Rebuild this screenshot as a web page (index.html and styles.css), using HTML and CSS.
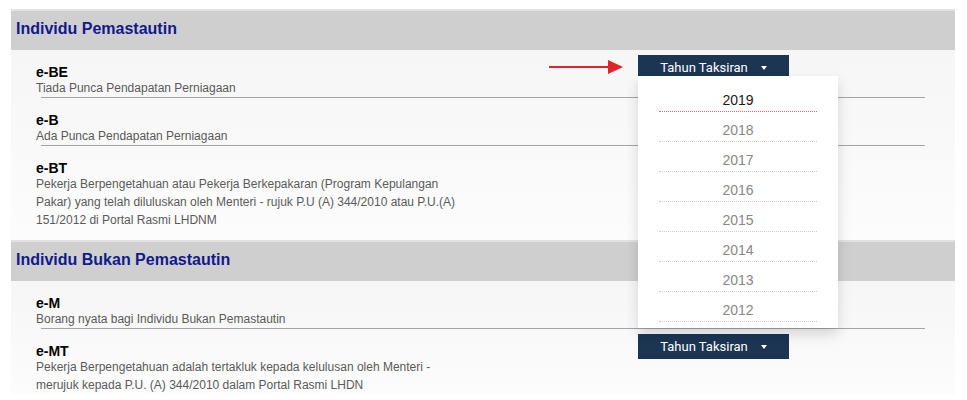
FILE: index.html
```
<!DOCTYPE html>
<html lang="ms">
<head>
<meta charset="utf-8">
<title>Borang Nyata</title>
<link rel="stylesheet" href="styles.css">
</head>
<body>
<div class="page">
  <section class="sec">
    <h2 class="sec-head">Individu Pemastautin</h2>
    <div class="sec-body">
      <div class="item">
        <div class="info">
          <div class="code">e-BE</div>
          <div class="desc">Tiada Punca Pendapatan Perniagaan</div>
        </div>
        <div class="picker">
          <svg class="arrow" width="75" height="16" viewBox="0 0 75 16" aria-hidden="true">
            <line x1="0" y1="8" x2="61" y2="8" stroke="#e3232a" stroke-width="2"/>
            <polygon points="59,1 74,8 59,15" fill="#e3232a"/>
          </svg>
          <button class="btn" type="button">Tahun Taksiran <span class="caret"></span></button>
          <ul class="menu">
            <li class="active">2019</li>
            <li>2018</li>
            <li>2017</li>
            <li>2016</li>
            <li>2015</li>
            <li>2014</li>
            <li>2013</li>
            <li>2012</li>
          </ul>
        </div>
      </div>
      <div class="item">
        <div class="info">
          <div class="code">e-B</div>
          <div class="desc">Ada Punca Pendapatan Perniagaan</div>
        </div>
      </div>
      <div class="item last">
        <div class="info">
          <div class="code">e-BT</div>
          <div class="desc">Pekerja Berpengetahuan atau Pekerja Berkepakaran (Program Kepulangan Pakar) yang telah diluluskan oleh Menteri - rujuk P.U (A) 344/2010 atau P.U.(A) 151/2012 di Portal Rasmi LHDNM</div>
        </div>
      </div>
    </div>
  </section>
  <section class="sec">
    <h2 class="sec-head">Individu Bukan Pemastautin</h2>
    <div class="sec-body">
      <div class="item">
        <div class="info">
          <div class="code">e-M</div>
          <div class="desc">Borang nyata bagi Individu Bukan Pemastautin</div>
        </div>
      </div>
      <div class="item last end">
        <div class="info">
          <div class="code">e-MT</div>
          <div class="desc">Pekerja Berpengetahuan adalah tertakluk kepada kelulusan oleh Menteri - merujuk kepada P.U. (A) 344/2010 dalam Portal Rasmi LHDN</div>
        </div>
        <div class="picker">
          <button class="btn" type="button">Tahun Taksiran <span class="caret"></span></button>
        </div>
      </div>
    </div>
  </section>
</div>
</body>
</html>
```
FILE: styles.css
```
html, body {
  margin: 0;
  padding: 0;
  background: #ffffff;
}

body {
  font-family: "Liberation Sans", Arial, sans-serif;
  color: #000;
}

.page {
  margin: 9px 12px 0 11px;
}

.sec-head {
  margin: 0;
  height: 41px;
  box-sizing: border-box;
  border-top: 2px solid #e2e1e2;
  background: #d0cfd0;
  padding-left: 5px;
  font-size: 16px;
  font-weight: bold;
  line-height: 35px;
  color: #101a8c;
}

.sec-body {
  background: linear-gradient(#f6f6f6, #fcfcfc);
}

.item {
  margin: 0 30px;
  padding-top: 5px;
  border-bottom: 1px solid #a4a4a4;
  display: flex;
  align-items: flex-start;
}

.item.last {
  border-bottom: none;
  padding-bottom: 11px;
}

.item.end {
  padding-bottom: 0;
}

.info {
  width: 602px;
  margin-left: -5px;
  padding-top: 10px;
  flex: none;
}

.code {
  font-size: 14px;
  font-weight: bold;
  line-height: 14px;
  color: #000;
}

.desc {
  font-size: 12px;
  line-height: 18px;
  color: #5a5a5a;
  max-width: 440px;
}

.picker {
  position: relative;
  width: 151px;
  flex: none;
}

.btn {
  width: 151px;
  height: 25px;
  border: none;
  margin: 0;
  padding: 0;
  background: #1b3553;
  color: #ffffff;
  font-family: Roboto, "Liberation Sans", sans-serif;
  font-size: 13px;
  display: flex;
  align-items: center;
  justify-content: center;
  gap: 13px;
  cursor: pointer;
}

.caret {
  width: 0;
  height: 0;
  border-left: 3.5px solid transparent;
  border-right: 3.5px solid transparent;
  border-top: 4px solid #ffffff;
  margin-top: 1px;
}

.arrow {
  position: absolute;
  left: -89px;
  top: 4px;
}

.menu {
  position: absolute;
  top: 21px;
  left: 0;
  width: 200px;
  margin: 0;
  padding: 6px 0;
  list-style: none;
  background: #ffffff;
  box-shadow: 0 6px 12px rgba(0, 0, 0, 0.15);
  z-index: 5;
}

.menu li {
  margin: 0 21px;
  padding: 8px 0 1px;
  line-height: 20px;
  font-size: 14px;
  text-align: center;
  color: #888888;
  border-bottom: 1px dotted #cfcfcf;
}

.menu li.active {
  color: #1a1a1a;
  border-bottom-color: #e06868;
}
```
